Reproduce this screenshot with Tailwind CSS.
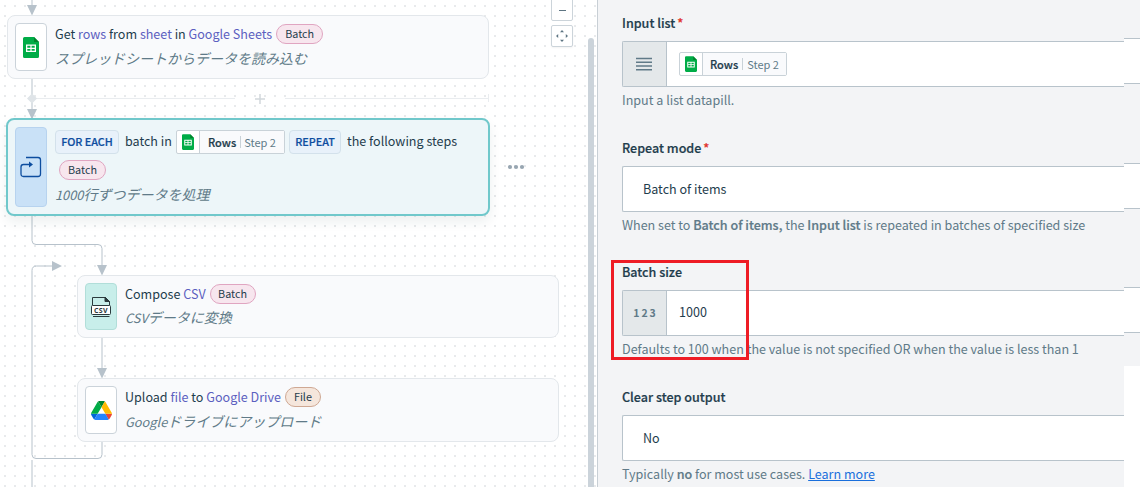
<!DOCTYPE html>
<html lang="ja">
<head>
<meta charset="utf-8">
<title>Recipe editor</title>
<script src="https://cdn.jsdelivr.net/npm/@tailwindcss/browser@4"></script>
</head>
<body class="flex h-[487px] w-[1140px] overflow-hidden bg-white font-['Noto_Sans_CJK_JP','Noto_Sans_CJK_SC',sans-serif] text-[12.55px] leading-5 text-[#1f3d4d]">
<svg class="hidden">
  <symbol id="sheets" viewBox="0 0 16 21">
    <path d="M1.5 0H11L16 5V19.5A1.5 1.5 0 0 1 14.5 21H1.500A1.500 1.500 0 0 1 0 19.500V1.500A1.500 1.500 0 0 1 1.500 0Z" fill="#00ac47"/>
    <path d="M11 0L16 5H11Z" fill="#00832d"/>
    <path d="M3 7.500H13V15H3ZM4.300 8.800V10.700H7.400V8.800ZM8.600 8.800V10.700H11.700V8.800ZM4.300 11.900V13.700H7.400V11.900ZM8.600 11.900V13.700H11.700V11.900Z" fill="#fff" fill-rule="evenodd"/>
  </symbol>
</svg>

<!-- Recipe canvas -->
<main class="relative h-full w-[597px] shrink-0 overflow-hidden bg-white">
  <svg class="absolute inset-0" width="597" height="487" fill="none">
    <defs><pattern id="dots" width="10" height="10" patternUnits="userSpaceOnUse"><rect x="4" y="5" width="2" height="2" fill="#e8eaec"/></pattern></defs>
    <rect width="597" height="487" fill="url(#dots)"/>
    <g stroke="#b7c2cb">
      <path d="M32 0V10M32 79V112M32 216V240.500Q32 244.500 36 244.500H98Q102 244.500 102 248.500V268M102 338V370M102 442V454.500Q102 458.500 98 458.500H36Q32 458.500 32 454.500V270.500Q32 266 36.500 266H54M32 460V487"/>
    </g>
    <g stroke="#e9ecef"><path d="M32 98.500H235M285 98.500H488.500M488.500 94V102"/></g>
    <path d="M27 98.500L32 93.500L37 98.500L32 103.500Z" fill="#dfe4e8"/>
    <path d="M260 94V104M255 99H265" stroke="#d2d8dc" stroke-width="1.500"/>
    <path d="M27 5H37L32 15.500ZM27 109H37L32 119.500ZM97 265H107L102 275.500ZM97 368H107L102 378.500ZM52 261V271L62 266Z" fill="#b7c2cb"/>
    <g fill="#98a6b1"><circle cx="510" cy="167" r="2.100"/><circle cx="516" cy="167" r="2.100"/><circle cx="522" cy="167" r="2.100"/></g>
  </svg>

  <section class="absolute left-[7px] top-[15px] flex h-16 w-[482px] gap-2 rounded-lg border border-[#e3e7eb] bg-[#f9fafc] p-[7px] whitespace-nowrap">
    <div class="flex h-12 w-8 shrink-0 items-center justify-center rounded border border-[#cbd3da] bg-white"><svg width="16" height="21"><use href="#sheets"/></svg></div>
    <div class="flex flex-col gap-[3px]">
      <div class="flex h-[22px] items-center gap-1"><span>Get <span class="text-[#5c5fc0]">rows</span> from <span class="text-[#5c5fc0]">sheet</span> in <span class="text-[#5c5fc0]">Google Sheets</span></span><span class="flex h-5 w-[47px] items-center justify-center rounded-full border border-[#e0a5c1] bg-[#f7e6ee] pb-[2px] text-[10.8px]">Batch</span></div>
      <p class="h-5 text-[14px] italic text-[#607a88]">スプレッドシートからデータを読み込む</p>
    </div>
  </section>

  <section class="absolute left-[6px] top-[118px] flex h-[98px] w-[484px] gap-2 rounded-lg border-2 border-[#70c8cb] bg-[#edf6f9] p-[7px] whitespace-nowrap shadow-[0_6px_12px_rgba(30,60,70,0.08)]">
    <div class="flex h-20 w-8 shrink-0 items-center justify-center rounded border border-[#b7d3ef] bg-[#c9e1f7]">
      <svg width="22" height="22" viewBox="0 0 22 22" fill="none" stroke="#0d4d9f" stroke-width="1.300"><path d="M6 1.500H18Q20.500 1.500 20.500 4V18Q20.500 20.500 18 20.500H3.500Q1 20.500 1 18V11Q1 8.500 3.500 8.500H11"/><path d="M9 5.500L13 8.500L9 11.500Z" fill="#0d4d9f" stroke="none"/></svg>
    </div>
    <div class="flex flex-col">
      <div class="mt-[3px] flex h-6 items-center">
        <span class="flex h-6 w-16 items-center justify-center rounded border border-[#d3e1eb] bg-[#e8f1fa] pb-[2px] text-[10.8px] font-medium text-[#0d4d9f] [-webkit-text-stroke:0.2px]">FOR EACH</span>
        <span class="ml-[6px] w-[51px] -translate-y-px">batch in</span>
        <span class="flex h-6 w-[109px] items-center rounded-xs border border-[#c9d2d8] bg-white text-[11px]"><span class="flex h-full w-[23px] items-center justify-center border-r border-[#c9d2d8]"><svg width="12" height="16"><use href="#sheets"/></svg></span><span class="flex h-full flex-1 items-center bg-[#f9fafc] pb-px pl-2"><b class="font-medium [-webkit-text-stroke:0.2px]">Rows</b><i class="ml-1 h-3 w-px bg-[#c9d2d8]"></i><span class="ml-[3px] text-[#607a88]">Step 2</span></span></span>
        <span class="ml-1 flex h-6 w-[52px] items-center justify-center rounded border border-[#d3e1eb] bg-[#e8f1fa] pb-[2px] text-[10.8px] font-medium text-[#0d4d9f] [-webkit-text-stroke:0.2px]">REPEAT</span>
        <span class="ml-[6px] -translate-y-px">the following steps</span>
      </div>
      <span class="mt-[6px] ml-1 flex h-5 w-[47px] items-center justify-center rounded-full border border-[#e0a5c1] bg-[#f7e6ee] pb-[2px] text-[10.8px]">Batch</span>
      <p class="mt-[4px] h-5 text-[14px] italic text-[#607a88]"><span class="text-[12.8px]">1000</span>行ずつデータを処理</p>
    </div>
  </section>

  <section class="absolute left-[77px] top-[275px] flex h-[63px] w-[482px] gap-2 rounded-lg border border-[#e3e7eb] bg-[#f9fafc] p-[7px] whitespace-nowrap">
    <div class="flex h-[47px] w-8 shrink-0 items-center justify-center rounded border border-[#b1ded9] bg-[#c8eeea]">
      <svg width="20" height="22" viewBox="0 0 20 22" fill="none" stroke="#2b3a3d"><path d="M1.500 9V1.500H14L18.500 5.500V9M2 20.500H18.500"/><path d="M14 1V5.500H18.500Z" fill="#2b3a3d"/><rect x=".5" y="9.500" width="19" height="9" rx="1" fill="#fff"/><text x="10" y="16.500" text-anchor="middle" font-family="Open Sans" font-size="7" font-weight="700" letter-spacing=".3" fill="#2b3a3d" stroke="none">CSV</text></svg>
    </div>
    <div class="flex flex-col gap-[2px]">
      <div class="flex h-[22px] items-center gap-1"><span>Compose <span class="text-[#5c5fc0]">CSV</span></span><span class="flex h-5 w-[46px] items-center justify-center rounded-full border border-[#e0a5c1] bg-[#f7e6ee] pb-[2px] text-[10.8px]">Batch</span></div>
      <p class="h-5 text-[14px] italic text-[#607a88]"><span class="text-[12.8px]">CSV</span>データに変換</p>
    </div>
  </section>

  <section class="absolute left-[77px] top-[378px] flex h-16 w-[482px] gap-2 rounded-lg border border-[#e3e7eb] bg-[#f9fafc] p-[7px] whitespace-nowrap">
    <div class="flex h-12 w-8 shrink-0 items-center justify-center rounded border border-[#cbd3da] bg-white">
      <svg width="21" height="19" viewBox="0 0 87.300 78"><path d="m6.600 66.850 3.850 6.650c.8 1.400 1.950 2.500 3.300 3.300l13.750-23.800h-27.500c0 1.550.4 3.100 1.200 4.500z" fill="#0066da"/><path d="m43.650 25-13.750-23.800c-1.350.8-2.500 1.900-3.300 3.300l-25.400 44a9.060 9.060 0 0 0-1.200 4.500h27.500z" fill="#00ac47"/><path d="m73.550 76.800c1.350-.8 2.500-1.900 3.300-3.300l1.600-2.750 7.650-13.250c.8-1.400 1.200-2.950 1.200-4.500h-27.502l5.852 11.500z" fill="#ea4335"/><path d="m43.650 25 13.750-23.800c-1.350-.8-2.900-1.200-4.500-1.200h-18.500c-1.600 0-3.150.45-4.500 1.200z" fill="#00832d"/><path d="m59.800 53h-32.300l-13.750 23.800c1.350.8 2.900 1.200 4.500 1.200h50.800c1.600 0 3.150-.45 4.500-1.200z" fill="#2684fc"/><path d="m73.400 26.500-12.700-22c-.8-1.400-1.950-2.500-3.300-3.300l-13.750 23.800 16.150 28h27.450c0-1.550-.4-3.100-1.200-4.500z" fill="#ffba00"/></svg>
    </div>
    <div class="flex flex-col gap-[3px]">
      <div class="flex h-[22px] items-center gap-1"><span>Upload <span class="text-[#5c5fc0]">file</span> to <span class="text-[#5c5fc0]">Google Drive</span></span><span class="flex h-5 w-9 items-center justify-center rounded-full border border-[#cfa893] bg-[#f5e6dc] pb-[2px] text-[10.8px]">File</span></div>
      <p class="h-5 text-[14px] italic text-[#607a88]"><span class="text-[12.8px]">Google</span>ドライブにアップロード</p>
    </div>
  </section>

  <!-- Zoom controls and scrollbar -->
  <div class="absolute left-[551px] top-[-1px] flex w-[22px] flex-col gap-1">
    <div class="flex h-[22px] items-center justify-center rounded-b-xs border border-[#ccd4da] bg-white"><i class="mt-px h-px w-[7px] bg-[#5d7482]"></i></div>
    <div class="flex h-[22px] items-center justify-center rounded-xs border border-[#ccd4da] bg-white shadow-xs"><svg width="12" height="12" fill="#5d7482"><path d="M6 0L8 2.200H4ZM6 12L8 9.800H4ZM0 6L2.200 4V8ZM12 6L9.800 4V8Z"/></svg></div>
  </div>
  <div class="absolute left-[588px] top-[38px] h-[460px] w-[6px] rounded-full bg-[#cbd3da]"></div>
</main>

<!-- Step settings -->
<aside class="relative flex h-full w-[527px] shrink-0 flex-col border-l border-[#c8cfd5] bg-[#f3f4f6] pl-6 whitespace-nowrap *:shrink-0">
  <div class="mt-[5px] flex h-[36px] items-center font-medium [-webkit-text-stroke:0.2px]">Input list<span class="ml-[2px] text-[#e0332c]">*</span></div>
  <div class="flex h-[46px] rounded-l-xs border border-r-0 border-[#b8c3cb] bg-white">
    <div class="flex w-11 items-center justify-center border-r border-[#b8c3cb] bg-[#e4e8ea] pr-px"><svg width="16" height="14" stroke="#607a88" stroke-width="1.500"><path d="M0 1.500H16M0 5.200H16M0 9H16M0 12.700H16"/></svg></div>
    <div class="flex items-center pl-3"><span class="flex h-6 w-[108px] items-center rounded-xs border border-[#c9d2d8] bg-white text-[11px]"><span class="flex h-full w-[23px] items-center justify-center border-r border-[#c9d2d8]"><svg width="12" height="16"><use href="#sheets"/></svg></span><span class="flex h-full flex-1 items-center bg-[#f9fafc] pb-px pl-[7px]"><b class="font-medium [-webkit-text-stroke:0.2px]">Rows</b><i class="ml-1 h-3 w-px bg-[#c9d2d8]"></i><span class="ml-1 text-[#607a88]">Step 2</span></span></span></div>
  </div>
  <p class="flex h-7 items-center pb-[2px] text-[#607a88]">Input a list datapill.</p>

  <div class="mt-[15px] flex h-[36px] items-center font-medium [-webkit-text-stroke:0.2px]">Repeat mode<span class="ml-[2px] text-[#e0332c]">*</span></div>
  <div class="flex h-[46px] items-center rounded-l-xs border border-r-0 border-[#b8c3cb] bg-white pl-5">Batch of items</div>
  <p class="flex h-7 items-center pb-[2px] text-[#607a88]"><span>When set to <b class="font-medium [-webkit-text-stroke:0.2px]">Batch of items,</b> the <b class="font-medium [-webkit-text-stroke:0.2px]">Input list</b> is repeated in batches of specified size</span></p>

  <div class="mt-[14px] flex h-[36px] items-center font-medium [-webkit-text-stroke:0.2px]">Batch size</div>
  <div class="flex h-[46px] rounded-l-xs border border-r-0 border-[#b8c3cb] bg-white">
    <div class="flex w-11 items-center justify-center border-r border-[#b8c3cb] bg-[#e4e8ea] pl-[2px] text-[10.5px] font-bold tracking-[2px] text-[#607a88]">123</div>
    <div class="flex items-center pb-[2px] pl-3">1000</div>
  </div>
  <p class="flex h-7 items-center pb-[2px] text-[#607a88]">Defaults to 100 when the value is not specified OR when the value is less than 1</p>

  <div class="mt-[15px] flex h-[36px] items-center font-medium [-webkit-text-stroke:0.2px]">Clear step output</div>
  <div class="flex h-[46px] items-center rounded-l-xs border border-r-0 border-[#b8c3cb] bg-white pl-5">No</div>
  <p class="flex h-7 items-center pb-[2px] text-[#607a88]"><span>Typically <b class="font-medium [-webkit-text-stroke:0.2px]">no</b> for most use cases. <a class="text-[#1a6fdc] underline">Learn more</a></span></p>

  <div class="absolute left-[13px] top-[260px] h-[100px] w-[138px] border-3 border-[#ee1c25]"></div>
</aside>

<!-- Trailing edge of the fields -->
<div class="flex h-[366px] w-4 shrink-0 flex-col bg-[#f3f4f6] pt-[38px]">
  <div class="h-[46px] border-y border-[#b8c3cb] bg-white"></div>
  <div class="mt-[79px] h-[46px] border-y border-[#b8c3cb] bg-white"></div>
  <div class="mt-[78px] h-[46px] border-y border-[#b8c3cb] bg-white"></div>
</div>
</body>
</html>
